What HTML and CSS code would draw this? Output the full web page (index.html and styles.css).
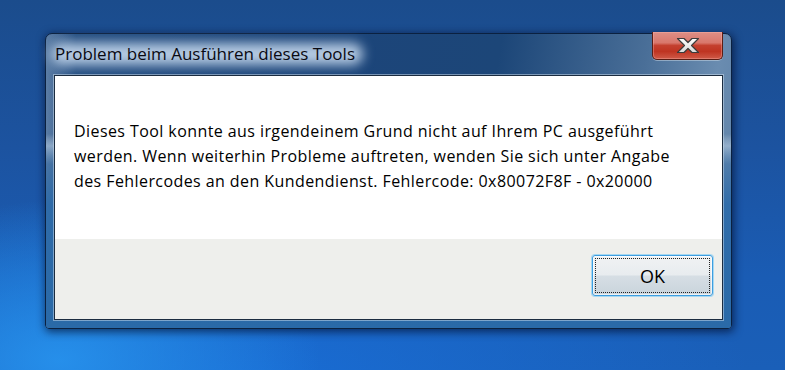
FILE: index.html
```html
<!DOCTYPE html>
<html lang="de">
<head>
<meta charset="utf-8">
<title>Problem beim Ausführen dieses Tools</title>
<link rel="stylesheet" href="styles.css">
</head>
<body>
<div class="desktop">
  <div class="window">
    <div class="titlebar">
      <div class="title">Problem beim Ausführen dieses Tools</div>
      <div class="close">
        <svg width="24" height="17" viewBox="0 0 24 17">
          <defs>
            <linearGradient id="xg" x1="0" y1="0" x2="0" y2="1">
              <stop offset="0" stop-color="#ffffff"/>
              <stop offset="1" stop-color="#d8d8d8"/>
            </linearGradient>
          </defs>
          <polygon points="1.5,1.5 8,1.5 12,5.5 16,1.5 22.5,1.5 15.5,8.5 22.5,15.5 16,15.5 12,11.5 8,15.5 1.5,15.5 8.5,8.5" fill="url(#xg)" stroke="#3b3b3b" stroke-width="1.2" stroke-linejoin="round"/>
        </svg>
      </div>
    </div>
    <div class="client">
      <div class="message">Dieses Tool konnte aus irgendeinem Grund nicht auf Ihrem PC ausgeführt<br>werden. Wenn weiterhin Probleme auftreten, wenden Sie sich unter Angabe<br>des Fehlercodes an den Kundendienst. Fehlercode: 0x80072F8F - 0x20000</div>
      <div class="footer">
        <button class="ok"><span class="focus">OK</span></button>
      </div>
    </div>
  </div>
</div>
</body>
</html>
```

FILE: styles.css
```css
html, body {
  margin: 0;
  padding: 0;
}

.desktop {
  width: 785px;
  height: 370px;
  box-sizing: border-box;
  padding: 33px 0 0 45px;
  overflow: hidden;
  background:
    radial-gradient(ellipse 260px 160px at 60px 360px, rgba(40,150,240,0.85), rgba(40,150,240,0) 100%),
    radial-gradient(ellipse 500px 200px at 250px 380px, rgba(25,110,215,0.9), rgba(25,110,215,0) 100%),
    linear-gradient(180deg, #1b4c8c 0%, #1c53a0 40%, #1a5cb4 75%, #1a5fb8 100%);
  font-family: "Open Sans", "Noto Sans", "DejaVu Sans", sans-serif;
}

.window {
  width: 687px;
  height: 296px;
  box-sizing: border-box;
  border: 1px solid #0b2140;
  border-radius: 7px 7px 4px 4px;
  box-shadow: 1px 2px 8px 1px rgba(0, 10, 40, 0.65);
  background:
    linear-gradient(90deg, rgba(190,210,230,0.35) 0px, rgba(190,210,230,0) 30px),
    linear-gradient(180deg, rgba(0,0,0,0) 0px, rgba(0,0,0,0) 100px, rgba(200,215,230,0.6) 112px, rgba(200,215,230,0) 130px),
    linear-gradient(100deg, #264f82 0%, #1c457a 40%, #1c4678 62%, #4a6f98 82%, #6a8cb0 92%, #5b7ea4 100%);
  display: flex;
  flex-direction: column;
  position: relative;
}

.window::after {
  content: "";
  position: absolute;
  left: 0;
  right: 0;
  bottom: 0;
  height: 190px;
  border-radius: 0 0 3px 3px;
  background: linear-gradient(180deg, rgba(40,100,170,0) 0%, rgba(40,105,170,0.85) 35%, #2a6aa8 100%);
  pointer-events: none;
  z-index: 0;
}

.titlebar {
  height: 41px;
  display: flex;
  align-items: flex-start;
  position: relative;
  z-index: 1;
}

.title {
  margin: 8px 0 0 9px;
  padding: 0 4px 0 0;
  font-size: 17px;
  line-height: 24px;
  color: #0a0a12;
  white-space: nowrap;
  position: relative;
}

.title::before {
  content: "";
  position: absolute;
  left: -4px;
  right: -4px;
  top: 1px;
  bottom: 1px;
  border-radius: 12px;
  background: rgba(190,210,232,0.95);
  filter: blur(6px);
  z-index: -1;
}

.close {
  margin: -2px 8px 0 auto;
  width: 71px;
  height: 28px;
  box-sizing: border-box;
  border: 1px solid #5b1d14;
  border-top: none;
  border-radius: 0 0 5px 5px;
  background: linear-gradient(180deg, #dd8f86 0%, #d9776c 40%, #c4402f 50%, #bf3422 72%, #cf5a48 100%);
  box-shadow: 0 1px 0 rgba(220,230,240,0.45), inset 0 0 0 1px rgba(255,190,180,0.35);
  display: flex;
  align-items: center;
  justify-content: center;
}

.client {
  margin: 0 8px;
  height: 245px;
  box-sizing: border-box;
  border: 1px solid #1b2c40;
  box-shadow: 0 0 0 1px rgba(210,225,240,0.5);
  display: flex;
  flex-direction: column;
  position: relative;
  z-index: 1;
  background: #ffffff;
}

.message {
  height: 163px;
  box-sizing: border-box;
  padding: 43px 10px 0 19px;
  font-size: 16px;
  letter-spacing: 0.42px;
  line-height: 25px;
  color: #000000;
  white-space: nowrap;
  background: #ffffff;
}

.footer {
  flex: 1;
  background: #eeefec;
  display: flex;
  justify-content: flex-end;
  align-items: flex-start;
}

.ok {
  margin: 16px 9px 0 0;
  width: 121px;
  height: 41px;
  box-sizing: border-box;
  padding: 2px;
  border: 1px solid #3d9ee0;
  border-radius: 3px;
  box-shadow: 0 0 0 1px rgba(120,200,245,0.6), inset 0 0 0 1px rgba(255,255,255,0.7);
  background: linear-gradient(180deg, #f0f2f3 0%, #e8ecef 48%, #d6dee4 52%, #c9d4dc 100%);
  font-family: inherit;
  font-size: 18px;
  color: #000000;
  display: flex;
  cursor: default;
}

.focus {
  flex: 1;
  display: flex;
  align-items: center;
  justify-content: center;
  border: 1px dotted #222222;
  line-height: 20px;
}
```
